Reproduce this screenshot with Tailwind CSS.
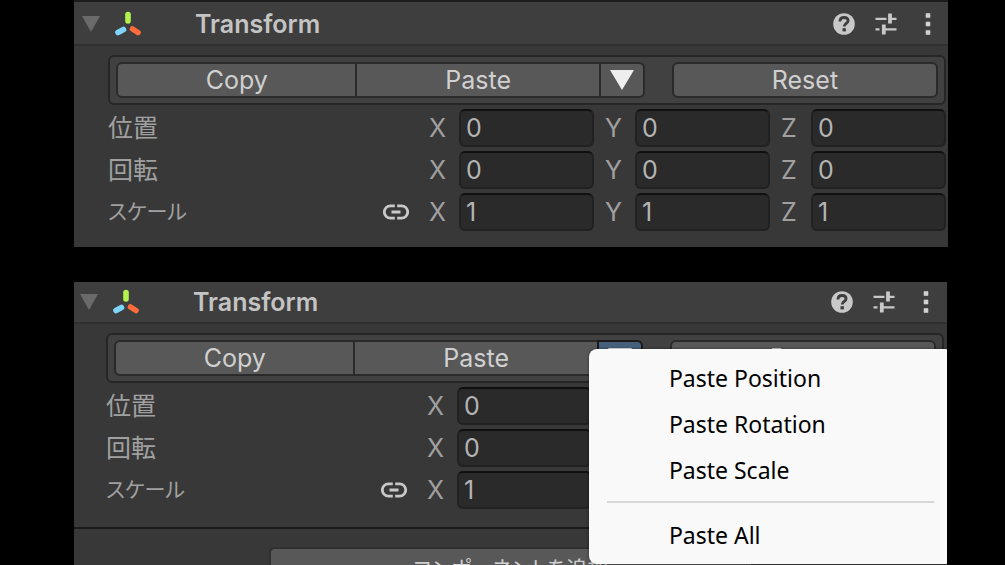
<!DOCTYPE html>
<html lang="ja">
<head>
    <meta charset="UTF-8">
    <meta name="viewport" content="width=device-width, initial-scale=1.0">
    <title>Transform</title>
    <script src="https://cdn.jsdelivr.net/npm/@tailwindcss/browser@4"></script>
</head>
<body class="bg-black h-dvh overflow-hidden flex flex-col gap-[35px] pl-[74px] pr-[57px] font-['Inter','Noto_Sans_CJK_JP',sans-serif] text-[25px] leading-8 text-[#d0d0d0]">

    <!-- icons shared by both panels -->
    <svg class="hidden">
        <symbol id="axes" viewBox="0 0 28 26">
            <g fill="none" stroke-linecap="round" stroke-width="5.600">
                <path stroke="#b4f34d" d="M14 3.500V10" />
                <path stroke="#7fd6fd" d="M4 21.500L9.500 18.500" />
                <path stroke="#ff6b3b" d="M18.500 18L24 21.500" />
            </g>
        </symbol>
        <symbol id="help" viewBox="0 0 22 22">
            <circle cx="11" cy="11" r="10.800" fill="#c8c8c8" />
            <path d="M7 8.500C7 5.800 8.800 4.500 11.100 4.500C13.500 4.500 15.100 5.800 15.100 7.800C15.100 10.300 11.200 10.600 11.200 13.500" fill="none" stroke="#3e3e3e" stroke-width="2.800" />
            <rect x="9.500" y="15.200" width="3.400" height="3.200" fill="#3e3e3e" />
        </symbol>
        <symbol id="preset" viewBox="0 0 22 22">
            <path d="M.5 5.800H11.500M15 5.800H21.500M.5 16.300H4.500M9 16.300H21.500" stroke="#c8c8c8" stroke-width="2.200" />
            <path d="M15 .5V10.500M8.800 11.500V21.500" stroke="#c8c8c8" stroke-width="3.800" />
        </symbol>
        <symbol id="more" viewBox="0 0 6 22">
            <path d="M1 .5h4v4h-4zM1 9h4v4h-4zM1 17.500h4v4h-4z" fill="#d0d0d0" stroke="#d0d0d0" stroke-width=".6" stroke-linejoin="round" />
        </symbol>
        <symbol id="link" viewBox="0 0 26 16">
            <path d="M11.800 1.800H7.500A6.200 6.200 0 0 0 7.500 14.200H11.800M14.200 1.800H18.500A6.200 6.200 0 0 1 18.500 14.200H14.200M8.500 8H17.500" fill="none" stroke="#c8c8c8" stroke-width="2.800" />
        </symbol>
    </svg>

    <section class="relative shrink-0 bg-[#383838] border-t-2 border-[#1c1c1c] pb-[16px]">
        <header class="flex items-center h-[44px] bg-[#3e3e3e] border-b-2 border-[#303030] pl-[8px] pr-[17px] pt-px">
            <button aria-label="Fold"><svg class="w-[18px] h-[16px]" viewBox="0 0 18 16"><path d="M0 0H18L9 16Z" fill="#6a6a6a" /></svg></button>
            <svg class="w-[28px] h-[26px] ml-[14px]"><use href="#axes" /></svg>
            <h2 class="font-semibold ml-[53px] flex-1 text-[#c4c4c4]">Transform</h2>
            <div class="flex gap-[20px]">
                <button aria-label="Help"><svg class="w-[22px] h-[22px]"><use href="#help" /></svg></button>
                <button aria-label="Presets"><svg class="w-[22px] h-[22px]"><use href="#preset" /></svg></button>
                <button aria-label="More" class="pl-[8px]"><svg class="w-[6px] h-[22px]"><use href="#more" /></svg></button>
            </div>
        </header>
        <div class="pl-[34px] pr-[2px] pt-[9px]">
            <div class="flex h-[50px] px-[6px] py-[5px] border-2 border-[#262626] rounded-md bg-[#414141]">
                <button class="flex-[241] bg-[#585858] border-2 border-[#2a2a2a] rounded-l-md leading-none">Copy</button>
                <button class="flex-[245] bg-[#585858] border-y-2 border-[#2a2a2a] leading-none">Paste</button>
                <button aria-label="Paste options" class="w-[46px] flex justify-center items-center bg-[#585858] border-2 border-[#2a2a2a] rounded-r-md">
                    <svg class="w-[24px] h-[20px]" viewBox="0 0 24 20"><path d="M0 0H24L12 20Z" fill="#eeeeee" /></svg>
                </button>
                <button class="flex-[266] ml-[27px] bg-[#585858] border-2 border-[#2a2a2a] rounded-md leading-none">Reset</button>
            </div>
            <div class="flex flex-col gap-[4px] pt-[4px] text-[#a0a0a0]">
                <div class="flex items-center h-[38px]">
                    <span class="w-[321px] shrink-0">位置</span>
                    <div class="flex-1 grid grid-cols-3 gap-[11px]">
                        <label class="flex items-center"><span class="w-[30px]">X</span><input class="flex-1 min-w-0 h-[38px] px-[5px] bg-[#2a2a2a] border-2 border-[#212121] border-t-[#101010] rounded-md text-[#b4b4b4]" value="0"></label>
                        <label class="flex items-center"><span class="w-[30px]">Y</span><input class="flex-1 min-w-0 h-[38px] px-[5px] bg-[#2a2a2a] border-2 border-[#212121] border-t-[#101010] rounded-md text-[#b4b4b4]" value="0"></label>
                        <label class="flex items-center"><span class="w-[30px]">Z</span><input class="flex-1 min-w-0 h-[38px] px-[5px] bg-[#2a2a2a] border-2 border-[#212121] border-t-[#101010] rounded-md text-[#b4b4b4]" value="0"></label>
                    </div>
                </div>
                <div class="flex items-center h-[38px]">
                    <span class="w-[321px] shrink-0">回転</span>
                    <div class="flex-1 grid grid-cols-3 gap-[11px]">
                        <label class="flex items-center"><span class="w-[30px]">X</span><input class="flex-1 min-w-0 h-[38px] px-[5px] bg-[#2a2a2a] border-2 border-[#212121] border-t-[#101010] rounded-md text-[#b4b4b4]" value="0"></label>
                        <label class="flex items-center"><span class="w-[30px]">Y</span><input class="flex-1 min-w-0 h-[38px] px-[5px] bg-[#2a2a2a] border-2 border-[#212121] border-t-[#101010] rounded-md text-[#b4b4b4]" value="0"></label>
                        <label class="flex items-center"><span class="w-[30px]">Z</span><input class="flex-1 min-w-0 h-[38px] px-[5px] bg-[#2a2a2a] border-2 border-[#212121] border-t-[#101010] rounded-md text-[#b4b4b4]" value="0"></label>
                    </div>
                </div>
                <div class="flex items-center h-[38px]">
                    <div class="w-[321px] shrink-0 flex items-center justify-between pr-[20px]">
                        <span class="text-[21px] [font-feature-settings:'palt']">スケール</span>
                        <button aria-label="Link scale"><svg class="w-[26px] h-[16px]"><use href="#link" /></svg></button>
                    </div>
                    <div class="flex-1 grid grid-cols-3 gap-[11px]">
                        <label class="flex items-center"><span class="w-[30px]">X</span><input class="flex-1 min-w-0 h-[38px] px-[5px] bg-[#2a2a2a] border-2 border-[#212121] border-t-[#101010] rounded-md text-[#b4b4b4]" value="1"></label>
                        <label class="flex items-center"><span class="w-[30px]">Y</span><input class="flex-1 min-w-0 h-[38px] px-[5px] bg-[#2a2a2a] border-2 border-[#212121] border-t-[#101010] rounded-md text-[#b4b4b4]" value="1"></label>
                        <label class="flex items-center"><span class="w-[30px]">Z</span><input class="flex-1 min-w-0 h-[38px] px-[5px] bg-[#2a2a2a] border-2 border-[#212121] border-t-[#101010] rounded-md text-[#b4b4b4]" value="1"></label>
                    </div>
                </div>
            </div>
        </div>
    </section>

    <!-- paste menu open -->
    <section class="relative flex-1 min-h-0 overflow-hidden bg-[#383838] mr-px">
        <header class="flex items-center h-[42px] bg-[#3e3e3e] border-b-2 border-[#303030] pl-[6px] pr-[18px]">
            <button aria-label="Fold"><svg class="w-[18px] h-[16px]" viewBox="0 0 18 16"><path d="M0 0H18L9 16Z" fill="#6a6a6a" /></svg></button>
            <svg class="w-[28px] h-[26px] ml-[14px]"><use href="#axes" /></svg>
            <h2 class="font-semibold ml-[53px] flex-1 text-[#c4c4c4]">Transform</h2>
            <div class="flex gap-[20px]">
                <button aria-label="Help"><svg class="w-[22px] h-[22px]"><use href="#help" /></svg></button>
                <button aria-label="Presets"><svg class="w-[22px] h-[22px]"><use href="#preset" /></svg></button>
                <button aria-label="More" class="pl-[8px]"><svg class="w-[6px] h-[22px]"><use href="#more" /></svg></button>
            </div>
        </header>
        <div class="pl-[32px] pr-[3px] pt-[9px]">
            <div class="flex h-[50px] px-[6px] py-[5px] border-2 border-[#262626] rounded-md bg-[#414141]">
                <button class="flex-[241] bg-[#585858] border-2 border-[#2a2a2a] rounded-l-md leading-none">Copy</button>
                <button class="flex-[245] bg-[#585858] border-y-2 border-[#2a2a2a] leading-none">Paste</button>
                <div class="relative flex w-[46px]">
                    <button aria-label="Paste options" aria-expanded="true" class="flex-1 flex justify-center items-center bg-[#46607c] border-2 border-[#1a1a1a] rounded-r-md">
                        <svg class="w-[24px] h-[20px]" viewBox="0 0 24 20"><path d="M0 0H24L12 20Z" fill="#eeeeee" /></svg>
                    </button>
                    <div role="menu" class="absolute z-10 top-[9px] -left-[8px] w-[364px] h-[215px] pt-[6px] flex flex-col bg-[#f9f9f9] rounded-lg shadow-[0_0_3px_#00000080] font-['Noto_Sans',sans-serif] text-[23px] text-black">
                        <button role="menuitem" class="h-[46px] pl-[80px] text-left">Paste Position</button>
                        <button role="menuitem" class="h-[46px] pl-[80px] text-left">Paste Rotation</button>
                        <button role="menuitem" class="h-[46px] pl-[80px] text-left">Paste Scale</button>
                        <hr class="border-t-2 border-[#d7d7d7] mt-[8px] mb-[9px] ml-[18px] mr-[19px]">
                        <button role="menuitem" class="h-[46px] pl-[80px] text-left">Paste All</button>
                    </div>
                </div>
                <button class="flex-[266] ml-[27px] bg-[#585858] border-2 border-[#2a2a2a] rounded-md leading-none">Reset</button>
            </div>
            <div class="flex flex-col gap-[4px] pt-[4px] text-[#a0a0a0]">
                <div class="flex items-center h-[38px]">
                    <span class="w-[321px] shrink-0">位置</span>
                    <div class="flex-1 grid grid-cols-3 gap-[11px]">
                        <label class="flex items-center"><span class="w-[30px]">X</span><input class="flex-1 min-w-0 h-[38px] px-[5px] bg-[#2a2a2a] border-2 border-[#212121] border-t-[#101010] rounded-md text-[#b4b4b4]" value="0"></label>
                    </div>
                </div>
                <div class="flex items-center h-[38px]">
                    <span class="w-[321px] shrink-0">回転</span>
                    <div class="flex-1 grid grid-cols-3 gap-[11px]">
                        <label class="flex items-center"><span class="w-[30px]">X</span><input class="flex-1 min-w-0 h-[38px] px-[5px] bg-[#2a2a2a] border-2 border-[#212121] border-t-[#101010] rounded-md text-[#b4b4b4]" value="0"></label>
                    </div>
                </div>
                <div class="flex items-center h-[38px]">
                    <div class="w-[321px] shrink-0 flex items-center justify-between pr-[20px]">
                        <span class="text-[21px] [font-feature-settings:'palt']">スケール</span>
                        <button aria-label="Link scale"><svg class="w-[26px] h-[16px]"><use href="#link" /></svg></button>
                    </div>
                    <div class="flex-1 grid grid-cols-3 gap-[11px]">
                        <label class="flex items-center"><span class="w-[30px]">X</span><input class="flex-1 min-w-0 h-[38px] px-[5px] bg-[#2a2a2a] border-2 border-[#212121] border-t-[#101010] rounded-md text-[#b4b4b4]" value="1"></label>
                    </div>
                </div>
            </div>
        </div>
        <div class="mt-[18px] pt-[18px] border-t-2 border-[#1a1a1a] flex justify-center">
            <button class="w-[484px] h-[44px] bg-[#585858] border-2 border-[#303030] rounded-md text-[21px] [font-feature-settings:'palt']">コンポーネントを追加</button>
        </div>
    </section>

</body>
</html>
